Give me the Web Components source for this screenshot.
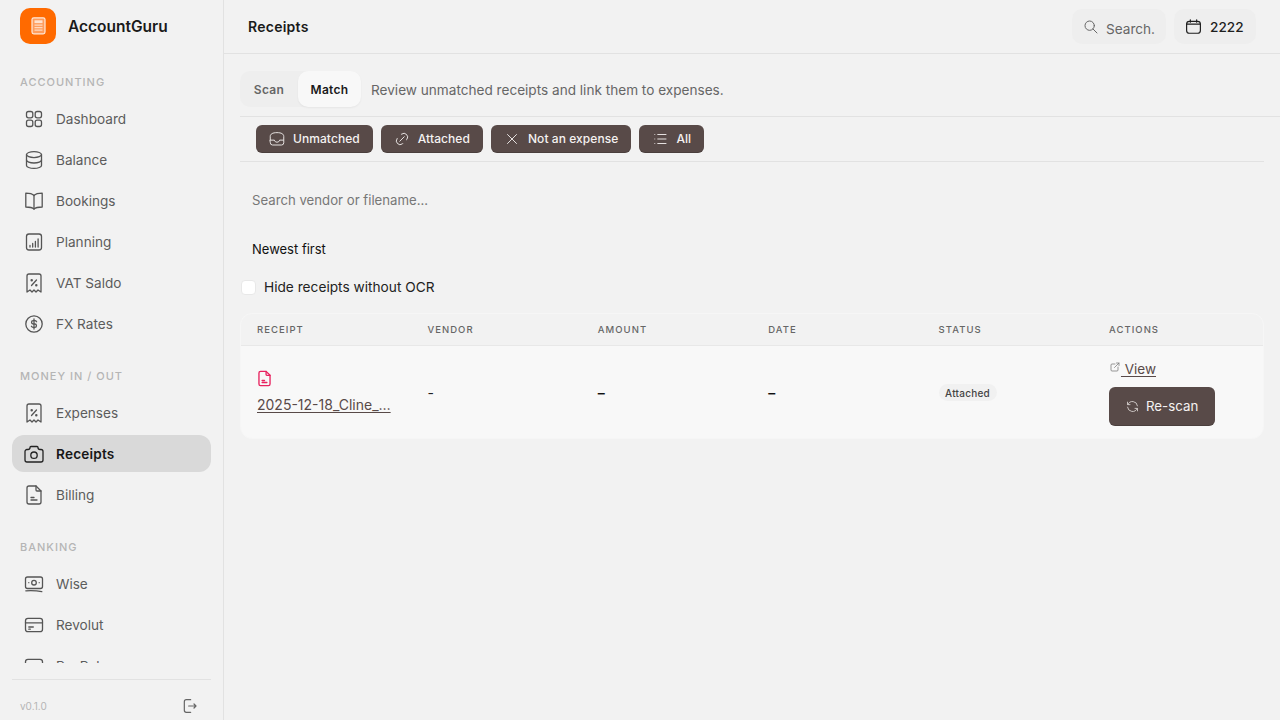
<!DOCTYPE html>
<html><head><meta charset="utf-8"><style>
html,body{margin:0;height:100%;background:#f2f2f2;font-family:Inter,"Liberation Sans",sans-serif;}
</style></head><body>
<ag-app>
  <ag-sidebar slot="side">
    <ag-section label="ACCOUNTING">
      <ag-nav icon="grid">Dashboard</ag-nav><ag-nav icon="db">Balance</ag-nav><ag-nav icon="book">Bookings</ag-nav><ag-nav icon="report">Planning</ag-nav><ag-nav icon="tax">VAT Saldo</ag-nav><ag-nav icon="coin">FX Rates</ag-nav>
    </ag-section>
    <ag-section label="MONEY IN / OUT">
      <ag-nav icon="tax">Expenses</ag-nav><ag-nav icon="camera" active>Receipts</ag-nav><ag-nav icon="file">Billing</ag-nav>
    </ag-section>
    <ag-section label="BANKING">
      <ag-nav icon="cash">Wise</ag-nav><ag-nav icon="card">Revolut</ag-nav><ag-nav icon="card">PayPal</ag-nav>
    </ag-section>
  </ag-sidebar>
  <ag-topbar slot="top" heading="Receipts"></ag-topbar>
  <ag-receipts slot="main"></ag-receipts>
</ag-app>
<script>
const ICONS={
grid:'<rect x="4.500" y="4.500" width="6.300" height="6.300" rx="2"/><rect x="13.200" y="4.500" width="6.300" height="6.300" rx="2"/><rect x="4.500" y="13.200" width="6.300" height="6.300" rx="2"/><rect x="13.200" y="13.200" width="6.300" height="6.300" rx="2"/>',
db:'<path d="M4.500 6.600a7.500 3 0 1 0 15 0a7.500 3 0 1 0-15 0"/><path d="M4.500 6.600v5.400a7.500 3 0 0 0 15 0v-5.400"/><path d="M4.500 12v5.400a7.500 3 0 0 0 15 0v-5.400"/>',
book:'<path d="M12 6.500C10.500 5 7.500 4.200 3.800 4.200v13.800c3.700 0 6.700.6 8.200 2c1.500-1.400 4.500-2 8.200-2V4.200C16.500 4.200 13.500 5 12 6.500z"/><path d="M12 6.500V20"/>',
report:'<rect x="4.500" y="4" width="15" height="16" rx="2.500"/><path d="M8 17v-1.500M10.700 17v-3.500M13.400 17v-5.500M16.100 17v-8"/>',
tax:'<path d="M9.500 14.500l5-5.500"/><circle cx="9.700" cy="9.300" r=".6"/><circle cx="14.300" cy="14.200" r=".6"/><path d="M5 21V5a2 2 0 0 1 2-2h10a2 2 0 0 1 2 2v16l-3-2l-2 2l-2-2l-2 2l-2-2l-3 2"/>',
coin:'<circle cx="12" cy="12" r="8.200"/><path d="M14.600 9.700a2 2 0 0 0-1.800-1h-1.600a1.650 1.650 0 1 0 0 3.300h1.600a1.650 1.650 0 1 1 0 3.300h-1.600a2 2 0 0 1-1.800-1"/><path d="M12 7v10"/>',
camera:'<path d="M5 7.500h1a2 2 0 0 0 2-2a1 1 0 0 1 1-1h6a1 1 0 0 1 1 1a2 2 0 0 0 2 2h1a2 2 0 0 1 2 2v8.500a2 2 0 0 1-2 2H5a2 2 0 0 1-2-2V9.500a2 2 0 0 1 2-2"/><circle cx="12" cy="13.200" r="3.200"/>',
file:'<path d="M14 3v4a1 1 0 0 0 1 1h4"/><path d="M17 21H7a2 2 0 0 1-2-2V5a2 2 0 0 1 2-2h7l5 5v11a2 2 0 0 1-2 2"/><path d="M9 17h6M9 14.500h3"/>',
cash:'<rect x="3.500" y="5" width="17" height="11.500" rx="2"/><circle cx="12" cy="10.700" r="2.300"/><path d="M6.800 10.700h.01M17.200 10.700h.01"/><path d="M3.800 18.800c5-.3 11-.2 16 .9"/>',
card:'<rect x="3.500" y="5.300" width="17" height="13.400" rx="2.500"/><path d="M3.500 9.800h17M6.800 14h4.500M6.800 16.200h1.500"/>',
logout:'<path d="M13 2.500H6.500a3 3 0 0 0-3 3v13a3 3 0 0 0 3 3H13"/><path d="M10 12h11M18 9l3 3l-3 3"/>',
search:'<circle cx="10" cy="10" r="7"/><path d="M21 21l-6-6"/>',
calendar:'<rect x="3.300" y="5.500" width="17.400" height="15" rx="3.500"/><path d="M8 3.500v3M16 3.500v3M3.300 9h17.400"/>',
inbox:'<path d="M3 13V8.500C3 5.500 6 3.500 12 3.500s9 2 9 5V13"/><path d="M3 13.500h5.500c.5 1.800 1.500 2.700 3.500 2.700s3-.9 3.500-2.700H21v3.500a3 3 0 0 1-3 3H6a3 3 0 0 1-3-3z"/>',
link:'<path d="M9 15l6-6"/><path d="M11 6l.5-.5a5 5 0 0 1 7 7l-.5.5"/><path d="M13 18l-.5.5a5 5 0 0 1-7-7l.5-.5"/>',
x:'<path d="M6 6l12 12M18 6L6 18"/>',
list:'<path d="M9 6h11M9 12h11M9 18h11M5 6v.01M5 12v.01M5 18v.01"/>',
ext:'<path d="M12 6H6a2 2 0 0 0-2 2v10a2 2 0 0 0 2 2h10a2 2 0 0 0 2-2v-6"/><path d="M11 13l9-9M15 4h5v5"/>',
refresh:'<path d="M20 11A8.100 8.100 0 0 0 4.500 9M4 5v4h4"/><path d="M4 13a8.100 8.100 0 0 0 15.500 2m.5 4v-4h-4"/>'
};
function def(name,css,html){
  customElements.define(name,class extends HTMLElement{
    connectedCallback(){
      if(this.shadowRoot)return;
      const r=this.attachShadow({mode:'open'});
      r.innerHTML='<style>'+css+'</style>'+(typeof html==='function'?html(this):html);
    }
  });
}
def('ag-icon',':host{display:inline-flex;flex:none;line-height:0}svg{display:block}',h=>{
  const s=h.getAttribute('size')||20,w=h.getAttribute('stroke-w')||1.5;
  return `<svg width="${s}" height="${s}" viewBox="0 0 24 24" fill="none" stroke="currentColor" stroke-width="${w}" stroke-linecap="round" stroke-linejoin="round">${ICONS[h.getAttribute('name')]}</svg>`;
});
def('ag-app',':host{display:grid;grid-template-columns:224px 1fr;grid-template-rows:54px 1fr;height:720px;overflow:hidden}.s{grid-row:1/3;display:flex;min-height:0}.t{display:flex}.m{display:block;min-height:0}',
'<div class="s"><slot name="side"></slot></div><div class="t"><slot name="top"></slot></div><div class="m"><slot name="main"></slot></div>');
def('ag-logo',':host{display:flex;align-items:center;gap:12px;height:36px;padding:8px 20px;font-size:15.500px;font-weight:600;color:#1a1a1a}.b{width:36px;height:36px;border-radius:10px;background:#ff6a00;display:flex;align-items:center;justify-content:center}',
`<div class="b"><svg width="24" height="24" viewBox="0 0 24 24" fill="none" stroke-linejoin="round"><rect x="6" y="3.800" width="13" height="16" rx="1.800" fill="#ff9c5c" stroke="#ffe9da" stroke-width="1.200"/><rect x="8.500" y="6.300" width="8" height="2.800" fill="#ffe3cf"/><path d="M8.500 11.200h8M8.500 13.700h8M8.500 16.200h8" stroke="#ffd9be" stroke-width="1.200"/></svg></div><span>AccountGuru</span>`);
def('ag-sidebar',':host{display:flex;flex-direction:column;width:224px;box-sizing:border-box;border-right:1px solid #e2e2e2;height:720px}nav{flex:1;min-height:0;overflow:hidden;padding:0 12px;margin-top:22px;display:flex;flex-direction:column;gap:26px}footer{margin:16px 12px 0;border-top:1px solid #e2e2e2;height:41px;box-sizing:border-box;padding:12px 12.700px 0 8px;display:flex;align-items:center;justify-content:space-between;font-size:10px;color:#b5b5b5;flex:none}footer ag-icon{color:#666}',
'<ag-logo></ag-logo><nav><slot></slot></nav><footer><span>v0.1.0</span><ag-icon name="logout" size="16" stroke-w="1.800"></ag-icon></footer>');
def('ag-section',':host{display:flex;flex-direction:column;flex:none}.l{font-size:11px;font-weight:500;letter-spacing:1px;color:#b5b5b5;padding:0 8px;height:16px;line-height:16px;margin-bottom:10px}.i{display:flex;flex-direction:column;gap:4px}',
h=>`<div class="l">${h.getAttribute('label')}</div><div class="i"><slot></slot></div>`);
def('ag-nav',':host{display:flex;align-items:center;gap:12px;height:37px;padding:0 12px;border-radius:12px;font-size:13.600px;color:#5c5c5c;flex:none}:host([active]){background:#d9d9d9;color:#171717;font-weight:600;letter-spacing:.2px}ag-icon{color:#555;margin:0 -2px}:host([active]) ag-icon{color:#222}',
h=>`<ag-icon name="${h.getAttribute('icon')}" size="24" stroke-w="1.300"></ag-icon><span><slot></slot></span>`);
def('ag-topbar',':host{flex:1;display:flex;align-items:center;justify-content:space-between;box-sizing:border-box;height:54px;border-bottom:1px solid #e2e2e2;padding:0 24px}h1{margin:0;font-size:14px;font-weight:600;letter-spacing:.25px;color:#1a1a1a}.r{display:flex;gap:8px}.c{display:flex;align-items:center;height:35px;border-radius:10px;background:#eeeeee;box-sizing:border-box}.s{padding:0 11px;gap:7px;width:94px;color:#666;font-size:13.600px;overflow:hidden}.s span{position:relative;top:2px}.y{padding:0 10px;gap:7px;width:82px;font-size:13.600px;font-weight:500;color:#1f1f1f}.s ag-icon{color:#666}',
h=>`<h1>${h.getAttribute('heading')}</h1><div class="r"><div class="c s"><ag-icon name="search" size="16"></ag-icon><span>Search.</span></div><div class="c y"><ag-icon name="calendar" size="19" stroke-w="1.500"></ag-icon><span>2222</span></div></div>`);
def('ag-tabs',':host{display:inline-flex;background:#eeeeee;border-radius:10px;height:36px}button{all:unset;box-sizing:border-box;height:36px;display:flex;align-items:center;justify-content:center;width:58px;font:600 12px Inter,sans-serif;letter-spacing:.3px;color:#666;border-radius:10px}button.on{width:63px;background:#f8f8f8;color:#1a1a1a;box-shadow:0 1px 2px rgba(0,0,0,.05)}',
'<button>Scan</button><button class="on">Match</button>');
def('ag-filter',':host{display:inline-flex;align-items:center;gap:7px;height:28px;box-sizing:border-box;padding:0 13px 1px 12px;background:#584a48;color:#f5f2f1;border-radius:6px;font-size:12px;font-weight:500;letter-spacing:.07px;box-shadow:inset 0 -1px 0 rgba(0,0,0,.15)}',
h=>`<ag-icon name="${h.getAttribute('icon')}" size="18" stroke-w="1.200"></ag-icon><span><slot></slot></span>`);
def('ag-badge',':host{display:inline-flex;align-items:center;height:17.500px;padding:0 6.500px;border-radius:9px;background:#f1f1f1;color:#444;font-size:10px;font-weight:500;letter-spacing:.25px}','<slot></slot>');
def('ag-table',`:host{display:block;margin:0;border:1px solid #f6f6f6;border-radius:12px;overflow:hidden;background:#f8f8f8}
.g{display:grid;grid-template-columns:repeat(5,170.400px) 1fr}
.h{height:31px;background:#f2f2f2;border-bottom:1px solid #e8e8e8;align-items:center}
.h div{padding:0 16px;font-size:9.500px;font-weight:500;letter-spacing:1.050px;color:#666}
.b{height:92px;align-items:center}.b>div{padding:0 16px;font-size:14px;color:#222;min-width:0}
.f{display:flex;flex-direction:column;align-items:flex-start;gap:8px;position:relative;top:-1px}.f ag-icon{color:#e8225f;margin-left:-2px}
a{color:#584a48;text-decoration:underline;text-underline-offset:2px;font-size:14px}
.fn{display:block;white-space:nowrap;line-height:17px}
.b>div.d{font-weight:600;color:#111}
.a{display:flex;flex-direction:column;align-items:flex-start;gap:10px;position:relative;top:1px}
.v{display:inline-flex;align-items:center;font-size:13.500px}.v ag-icon{color:#777;position:relative;top:-2px}
.b>div .rs{display:flex;align-items:center;gap:6px;height:39px;padding:0 17px 0 16px;box-sizing:border-box;background:#584a48;color:#f5f2f1;border-radius:6px;font-size:13.300px;box-shadow:inset 0 -1px 0 rgba(0,0,0,.15)}
.rs ag-icon{color:#d8d2d0}`,
`<div class="g h"><div>RECEIPT</div><div>VENDOR</div><div>AMOUNT</div><div>DATE</div><div>STATUS</div><div>ACTIONS</div></div>
<div class="g b"><div class="f"><ag-icon name="file" size="19" stroke-w="1.700"></ag-icon><a class="fn">2025-12-18_Cline_…</a></div><div>-</div><div class="d">–</div><div class="d">–</div><div><ag-badge>Attached</ag-badge></div><div class="a"><a class="v"><ag-icon name="ext" size="12"></ag-icon>&nbsp;View</a><div class="rs"><ag-icon name="refresh" size="15" stroke-w="1.400"></ag-icon><span>Re-scan</span></div></div></div>`);
def('ag-receipts',`:host{display:block;padding:17px 16px 0}
.top{display:flex;align-items:center;gap:10px;height:36px;font-size:13.600px;color:#666}
.top span{position:relative;top:1px}
.hr1{border-top:1px solid #e2e2e2;margin:9px -16px 0 0}
.fl{display:flex;gap:8px;padding:8px 16px;height:28px;border-bottom:1px solid #e2e2e2}
.q{font-size:13.200px;color:#777;padding:0 12px;height:17px;line-height:17px;margin-top:30px}
.s{font-size:13px;color:#111;padding:0 12px;height:17px;line-height:17px;margin-top:32px}
.c{display:flex;align-items:center;gap:8px;font-size:13.700px;color:#222;margin-top:21px;height:16px;margin-bottom:18px;padding-left:1px}
.c i{width:15px;height:15px;background:#fff;border:1px solid #e8e8e8;border-radius:4px;box-sizing:border-box;display:block}`,
`<div class="top"><ag-tabs></ag-tabs><span>Review unmatched receipts and link them to expenses.</span></div>
<div class="hr1"></div>
<div class="fl"><ag-filter icon="inbox">Unmatched</ag-filter><ag-filter icon="link">Attached</ag-filter><ag-filter icon="x">Not an expense</ag-filter><ag-filter icon="list">All</ag-filter></div>
<div class="q">Search vendor or filename...</div>
<div class="s">Newest first</div>
<label class="c"><i></i><span>Hide receipts without OCR</span></label>
<ag-table></ag-table>`);
</script>
</body></html>
